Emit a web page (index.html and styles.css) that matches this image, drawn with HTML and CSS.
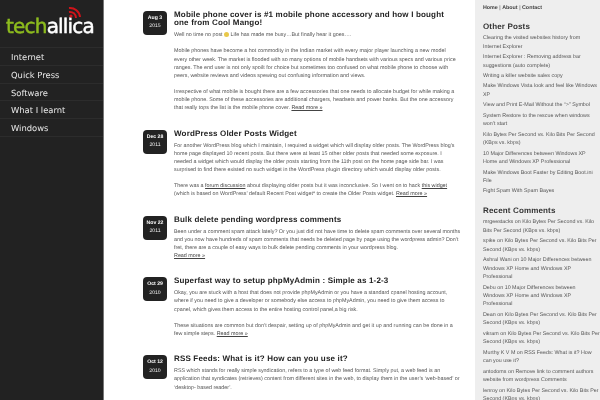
FILE: index.html
```html
<!DOCTYPE html>
<html>
<head>
<meta charset="utf-8">
<title>Techallica</title>
<link rel="stylesheet" href="styles.css">
</head>
<body>
<div class="page">
  <aside class="nav">
    <div class="logo">
      <span class="logo-tech">tech</span><span class="logo-allica">allica</span>
      <svg class="logo-rss" viewBox="0 0 14 14" width="14" height="14"><g fill="none" stroke="#d0131a" stroke-width="2"><path d="M1 3 A10 10 0 0 1 12 12"/><path d="M1 7 A6 6 0 0 1 8 13"/></g><circle cx="3" cy="11" r="1.6" fill="#d0131a"/></svg>
    </div>
    <ul class="menu">
      <li>Internet</li>
      <li>Quick Press</li>
      <li>Software</li>
      <li>What I learnt</li>
      <li>Windows</li>
    </ul>
  </aside>
  <main class="posts">
    <article class="post">
      <div class="date"><b>Aug 3</b><span>2015</span></div>
      <div class="body">
        <h2>Mobile phone cover is #1 mobile phone accessory and how I bought<br>one from Cool Mango!</h2>
        <p>Well no time no post <span class="smile"></span> Life has made me busy…But finally hear it goes….</p>
        <p>Mobile phones have become a hot commodity in the Indian market with every major player launching a new model<br>every other week. The market is flooded with so many options of mobile handsets with various specs and various price<br>ranges. The end user is not only spoilt for choice but sometimes too confused on what mobile phone to choose with<br>peers, website reviews and videos spewing out confusing information and views.</p>
        <p>Irrespective of what mobile is bought there are a few accessories that one needs to allocate budget for while making a<br>mobile phone. Some of these accessories are additional chargers, headsets and power banks. But the one accessory<br>that really tops the list is the mobile phone cover. <a>Read more »</a></p>
      </div>
    </article>
    <article class="post">
      <div class="date"><b>Dec 28</b><span>2011</span></div>
      <div class="body">
        <h2>WordPress Older Posts Widget</h2>
        <p>For another WordPress blog which I maintain, I required a widget which will display older posts. The WordPress blog’s<br>home page displayed 10 recent posts. But there were at least 15 other older posts that needed some exposure. I<br>needed a widget which would display the older posts starting from the 11th post on the home page side bar. I was<br>surprised to find there existed no such widget in the WordPress plugin directory which would display older posts.</p>
        <p>There was a <a>forum discussion</a> about displaying older posts but it was inconclusive. So I went on to hack <a>this widget</a><br>(which is based on WordPress’ default Recent Post widget* to create the Older Posts widget. <a>Read more »</a></p>
      </div>
    </article>
    <article class="post">
      <div class="date"><b>Nov 22</b><span>2011</span></div>
      <div class="body">
        <h2>Bulk delete pending wordpress comments</h2>
        <p>Been under a comment spam attack lately? Or you just did not have time to delete spam comments over several months<br>and you now have hundreds of spam comments that needs be deleted page by page using the wordpress admin? Don’t<br>fret, there are a couple of easy ways to bulk delete pending comments in your wordpress blog.<br><a>Read more »</a></p>
      </div>
    </article>
    <article class="post">
      <div class="date"><b>Oct 29</b><span>2010</span></div>
      <div class="body">
        <h2>Superfast way to setup phpMyAdmin : Simple as 1-2-3</h2>
        <p>Okay, you are stuck with a host that does not provide phpMyAdmin or you have a standard cpanel hosting account,<br>where if you need to give a developer or somebody else access to phpMyAdmin, you need to give them access to<br>cpanel, which gives them access to the entire hosting control panel,a big risk.</p>
        <p>These situations are common but don’t despair, setting up of phpMyAdmin and get it up and running can be done in a<br>few simple steps. <a>Read more »</a></p>
      </div>
    </article>
    <article class="post">
      <div class="date"><b>Oct 12</b><span>2010</span></div>
      <div class="body">
        <h2>RSS Feeds: What is it? How can you use it?</h2>
        <p>RSS which stands for really simple syndication, refers to a type of web feed format. Simply put, a web feed is an<br>application that syndicates (retrieves) content from different sites in the web, to display them in the user’s ‘web-based’ or<br>‘desktop- based reader’.</p>
      </div>
    </article>
  </main>
  <aside class="side">
    <div class="top"><b>Home</b> | <b>About</b> | <b>Contact</b></div>
    <h3>Other Posts</h3>
    <ul>
      <li>Clearing the visited websites history from<br>Internet Explorer</li>
      <li>Internet Explorer : Removing address bar<br>suggestions (auto complete)</li>
      <li>Writing a killer website sales copy</li>
      <li>Make Windows Vista look and feel like Windows<br>XP</li>
      <li>View and Print E-Mail Without the “&gt;” Symbol</li>
      <li>System Restore to the rescue when windows<br>won’t start</li>
      <li>Kilo Bytes Per Second vs. Kilo Bits Per Second<br>(KBps vs. kbps)</li>
      <li>10 Major Differences between Windows XP<br>Home and Windows XP Professional</li>
      <li>Make Windows Boot Faster by Editing Boot.ini<br>File</li>
      <li>Fight Spam With Spam Bayes</li>
    </ul>
    <h3>Recent Comments</h3>
    <ul>
      <li>mrgeestacks on Kilo Bytes Per Second vs. Kilo<br>Bits Per Second (KBps vs. kbps)</li>
      <li>spike on Kilo Bytes Per Second vs. Kilo Bits Per<br>Second (KBps vs. kbps)</li>
      <li>Ashral Wani on 10 Major Differences between<br>Windows XP Home and Windows XP<br>Professional</li>
      <li>Debu on 10 Major Differences between<br>Windows XP Home and Windows XP<br>Professional</li>
      <li>Dean on Kilo Bytes Per Second vs. Kilo Bits Per<br>Second (KBps vs. kbps)</li>
      <li>vikram on Kilo Bytes Per Second vs. Kilo Bits Per<br>Second (KBps vs. kbps)</li>
      <li>Murthy K V M on RSS Feeds: What is it? How<br>can you use it?</li>
      <li>antodoms on Remove link to comment authors<br>website from wordpress Comments</li>
      <li>lenroy on Kilo Bytes Per Second vs. Kilo Bits Per<br>Second (KBps vs. kbps)</li>
    </ul>
  </aside>
</div>
</body>
</html>
```
FILE: styles.css
```css
* { box-sizing: border-box; }
html, body { margin: 0; padding: 0; height: 400px; overflow: hidden; background: #fff; }
body { font-family: "Liberation Sans", Arial, sans-serif; text-rendering: geometricPrecision; }
.page { display: flex; width: 600px; height: 400px; overflow: hidden; filter: blur(0.3px); }

.nav { width: 104px; flex: none; background: #222; border-right: 1px solid #777; }
.logo { position: relative; height: 47px; padding: 14px 0 0 6px; font-family: "DejaVu Sans", sans-serif; font-size: 20px; -webkit-text-stroke: 0.5px currentColor; letter-spacing: -0.8px; line-height: 24px; white-space: nowrap; }
.logo-tech { color: #8dbb1e; }
.logo-allica { color: #fff; }
.logo-rss { position: absolute; left: 68px; top: 5px; }
.menu { list-style: none; margin: 0; padding: 0; }
.menu li { height: 17.75px; padding: 1px 0 0 11px; line-height: 16px; font-family: "DejaVu Sans", sans-serif; font-size: 8.4px; color: #e8e8e8; border-top: 1px solid #2c2c2c; white-space: nowrap; }
.menu li:last-child { border-bottom: 1px solid #2c2c2c; height: 18.75px; }

.posts { width: 371px; flex: none; padding: 10.75px 0 0 39px; font-size: 5.38px; line-height: 8.14px; color: #555; white-space: nowrap; }
.post { display: flex; margin-bottom: 17.2px; }
.date { width: 24px; height: 24px; flex: none; margin-right: 7px; background: #222; border-radius: 4px; color: #eee; display: flex; flex-direction: column; align-items: center; padding-top: 3px; font-size: 5.15px; line-height: 8.3px; }
.date b { color: #fff; }
.body { flex: 1; }
h2 { margin: 0 0 3.5px; font-size: 8px; line-height: 8.5px; font-weight: 700; color: #222; letter-spacing: 0.17px; }
p { margin: 0 0 8px; }
p:last-child { margin-bottom: 0; }
a { color: #444; text-decoration: underline; }
.smile { display: inline-block; width: 5px; height: 5px; border-radius: 50%; background: #e8c84a; vertical-align: -0.5px; }

.side { flex: 1; background: #eee; padding: 4px 0 0 8px; font-size: 5.35px; line-height: 8.45px; color: #555; white-space: nowrap; }
.top { color: #444; margin-bottom: 9.5px; }
h3 { margin: 0 0 2.25px; font-size: 8px; line-height: 10px; font-weight: 700; color: #333; letter-spacing: 0.15px; }
.side ul { list-style: none; margin: 0 0 10.25px; padding: 0; }
.side li { margin-bottom: 2px; }
```
